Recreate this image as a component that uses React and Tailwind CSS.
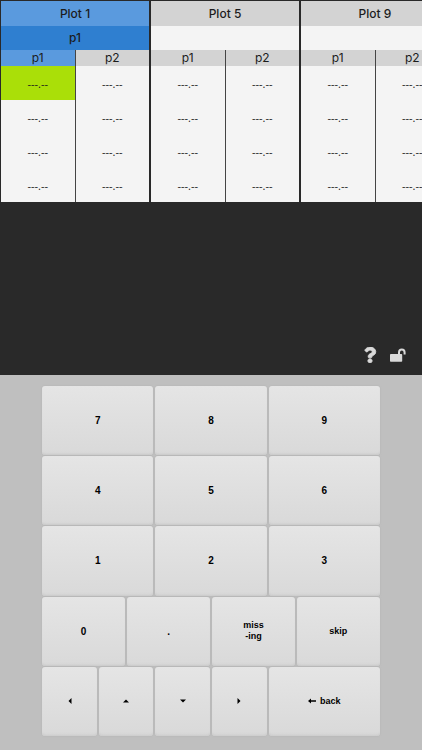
import { FaQuestion } from 'react-icons/fa';

const plots = [
    { name: 'Plot 1', trait: 'p1', active: true },
    { name: 'Plot 5', trait: '', active: false },
    { name: 'Plot 9', trait: '', active: false },
];

const ROWS = [0, 1, 2, 3];
const EMPTY_VALUE = '---.--';

const arrows = {
    left: 'M6 0 L2 4 L6 8 Z',
    up: 'M0 6 L4 2 L8 6 Z',
    down: 'M0 2 L4 6 L8 2 Z',
    right: 'M2 0 L6 4 L2 8 Z',
};

function PlotTable({ plot }) {
    const { name, trait, active } = plot;

    return (
        <table className="w-[148px] shrink-0 table-fixed border-collapse bg-[#f4f4f4] text-center text-[#1c1c1c]">
            <thead className="text-[12px] leading-4">
                <tr>
                    <th
                        colSpan={2}
                        className={`h-[25px] p-0 font-medium ${active ? 'bg-[#5a9ade]' : 'bg-[#d3d3d3]'}`}
                    >
                        {name}
                    </th>
                </tr>
                <tr>
                    <td
                        colSpan={2}
                        className={`h-6 p-0 font-medium ${active ? 'bg-[#2f7fd0]' : 'bg-[#f4f4f4]'}`}
                    >
                        {trait}
                    </td>
                </tr>
                <tr>
                    <th className={`h-4 p-0 font-normal ${active ? 'bg-[#5a9ade]' : 'bg-[#d3d3d3]'}`}>p1</th>
                    <th className="h-4 border-l border-[#444] bg-[#d3d3d3] p-0 font-normal">p2</th>
                </tr>
            </thead>
            <tbody className="font-['Open_Sans',sans-serif] text-[11px] leading-4">
                {ROWS.map((row) => (
                    <tr key={row}>
                        <td className={`h-[34px] p-0 pt-0.5 ${active && row === 0 ? 'bg-[#aadf08]' : ''}`}>{EMPTY_VALUE}</td>
                        <td className="h-[34px] border-l border-[#444] p-0 pt-0.5">{EMPTY_VALUE}</td>
                    </tr>
                ))}
            </tbody>
        </table>
    );
}

function UnlockIcon() {
    return (
        <svg viewBox="0 0 16 14" className="h-3.5 w-4" aria-hidden="true">
            <rect x="0" y="6" width="12.2" height="7.8" rx="0.8" fill="currentColor" />
            <path d="M9 7 V4.4 A2.8 2.8 0 0 1 14.6 4.4 V6.6" fill="none" stroke="currentColor" strokeWidth="2" />
        </svg>
    );
}

function Key({ span = 'col-span-4', size = 'text-[10px]', label, children }) {
    return (
        <button
            type="button"
            aria-label={label}
            className={`${span} ${size} flex items-center justify-center gap-1 rounded-[3px] bg-linear-to-b from-[#e5e5e5] to-[#d9d9d9] leading-[11px] font-bold text-black shadow-[inset_0_-3px_3px_-2px_#c9c9c9,0_0_2px_#b0b0b0]`}
        >
            {children}
        </button>
    );
}

function ArrowKey({ direction }) {
    return (
        <Key span="col-span-2" label={direction}>
            <svg viewBox="0 0 8 8" className="size-[6px]" fill="currentColor" aria-hidden="true">
                <path d={arrows[direction]} />
            </svg>
        </Key>
    );
}

export default function App() {
    return (
        <div className="flex h-screen flex-col bg-[#292929] font-['Inter',sans-serif]">
            <main className="flex h-1/2 flex-col justify-between overflow-hidden">
                <div className="flex gap-0.5 overflow-hidden pt-px pl-px">
                    {plots.map((plot) => (
                        <PlotTable key={plot.name} plot={plot} />
                    ))}
                </div>
                <div className="flex items-center justify-end gap-3 pr-4 pb-3 text-[#d9d9d9]">
                    <button type="button" aria-label="Help">
                        <FaQuestion className="size-4" stroke="currentColor" strokeWidth={24} />
                    </button>
                    <button type="button" aria-label="Unlock">
                        <UnlockIcon />
                    </button>
                </div>
            </main>

            <section className="flex h-1/2 justify-center bg-[#bfbfbf] pt-[11px] pb-[14px] font-['Liberation_Sans',sans-serif]">
                <div className="grid w-4/5 grid-cols-12 grid-rows-5 gap-x-0.5 gap-y-px">
                    {['7', '8', '9', '4', '5', '6', '1', '2', '3'].map((digit) => (
                        <Key key={digit}>{digit}</Key>
                    ))}
                    <Key span="col-span-3">0</Key>
                    <Key span="col-span-3">.</Key>
                    <Key span="col-span-3" size="text-[9px]">
                        <span>
                            miss
                            <br />
                            -ing
                        </span>
                    </Key>
                    <Key span="col-span-3" size="text-[9px]">skip</Key>
                    <ArrowKey direction="left" />
                    <ArrowKey direction="up" />
                    <ArrowKey direction="down" />
                    <ArrowKey direction="right" />
                    <Key size="text-[9px]">
                        <svg viewBox="0 0 8 6" className="h-[6px] w-2" fill="currentColor" aria-hidden="true">
                            <path d="M0 3 L3 0.5 V2.3 H8 V3.7 H3 V5.5 Z" />
                        </svg>
                        back
                    </Key>
                </div>
            </section>
        </div>
    );
}
